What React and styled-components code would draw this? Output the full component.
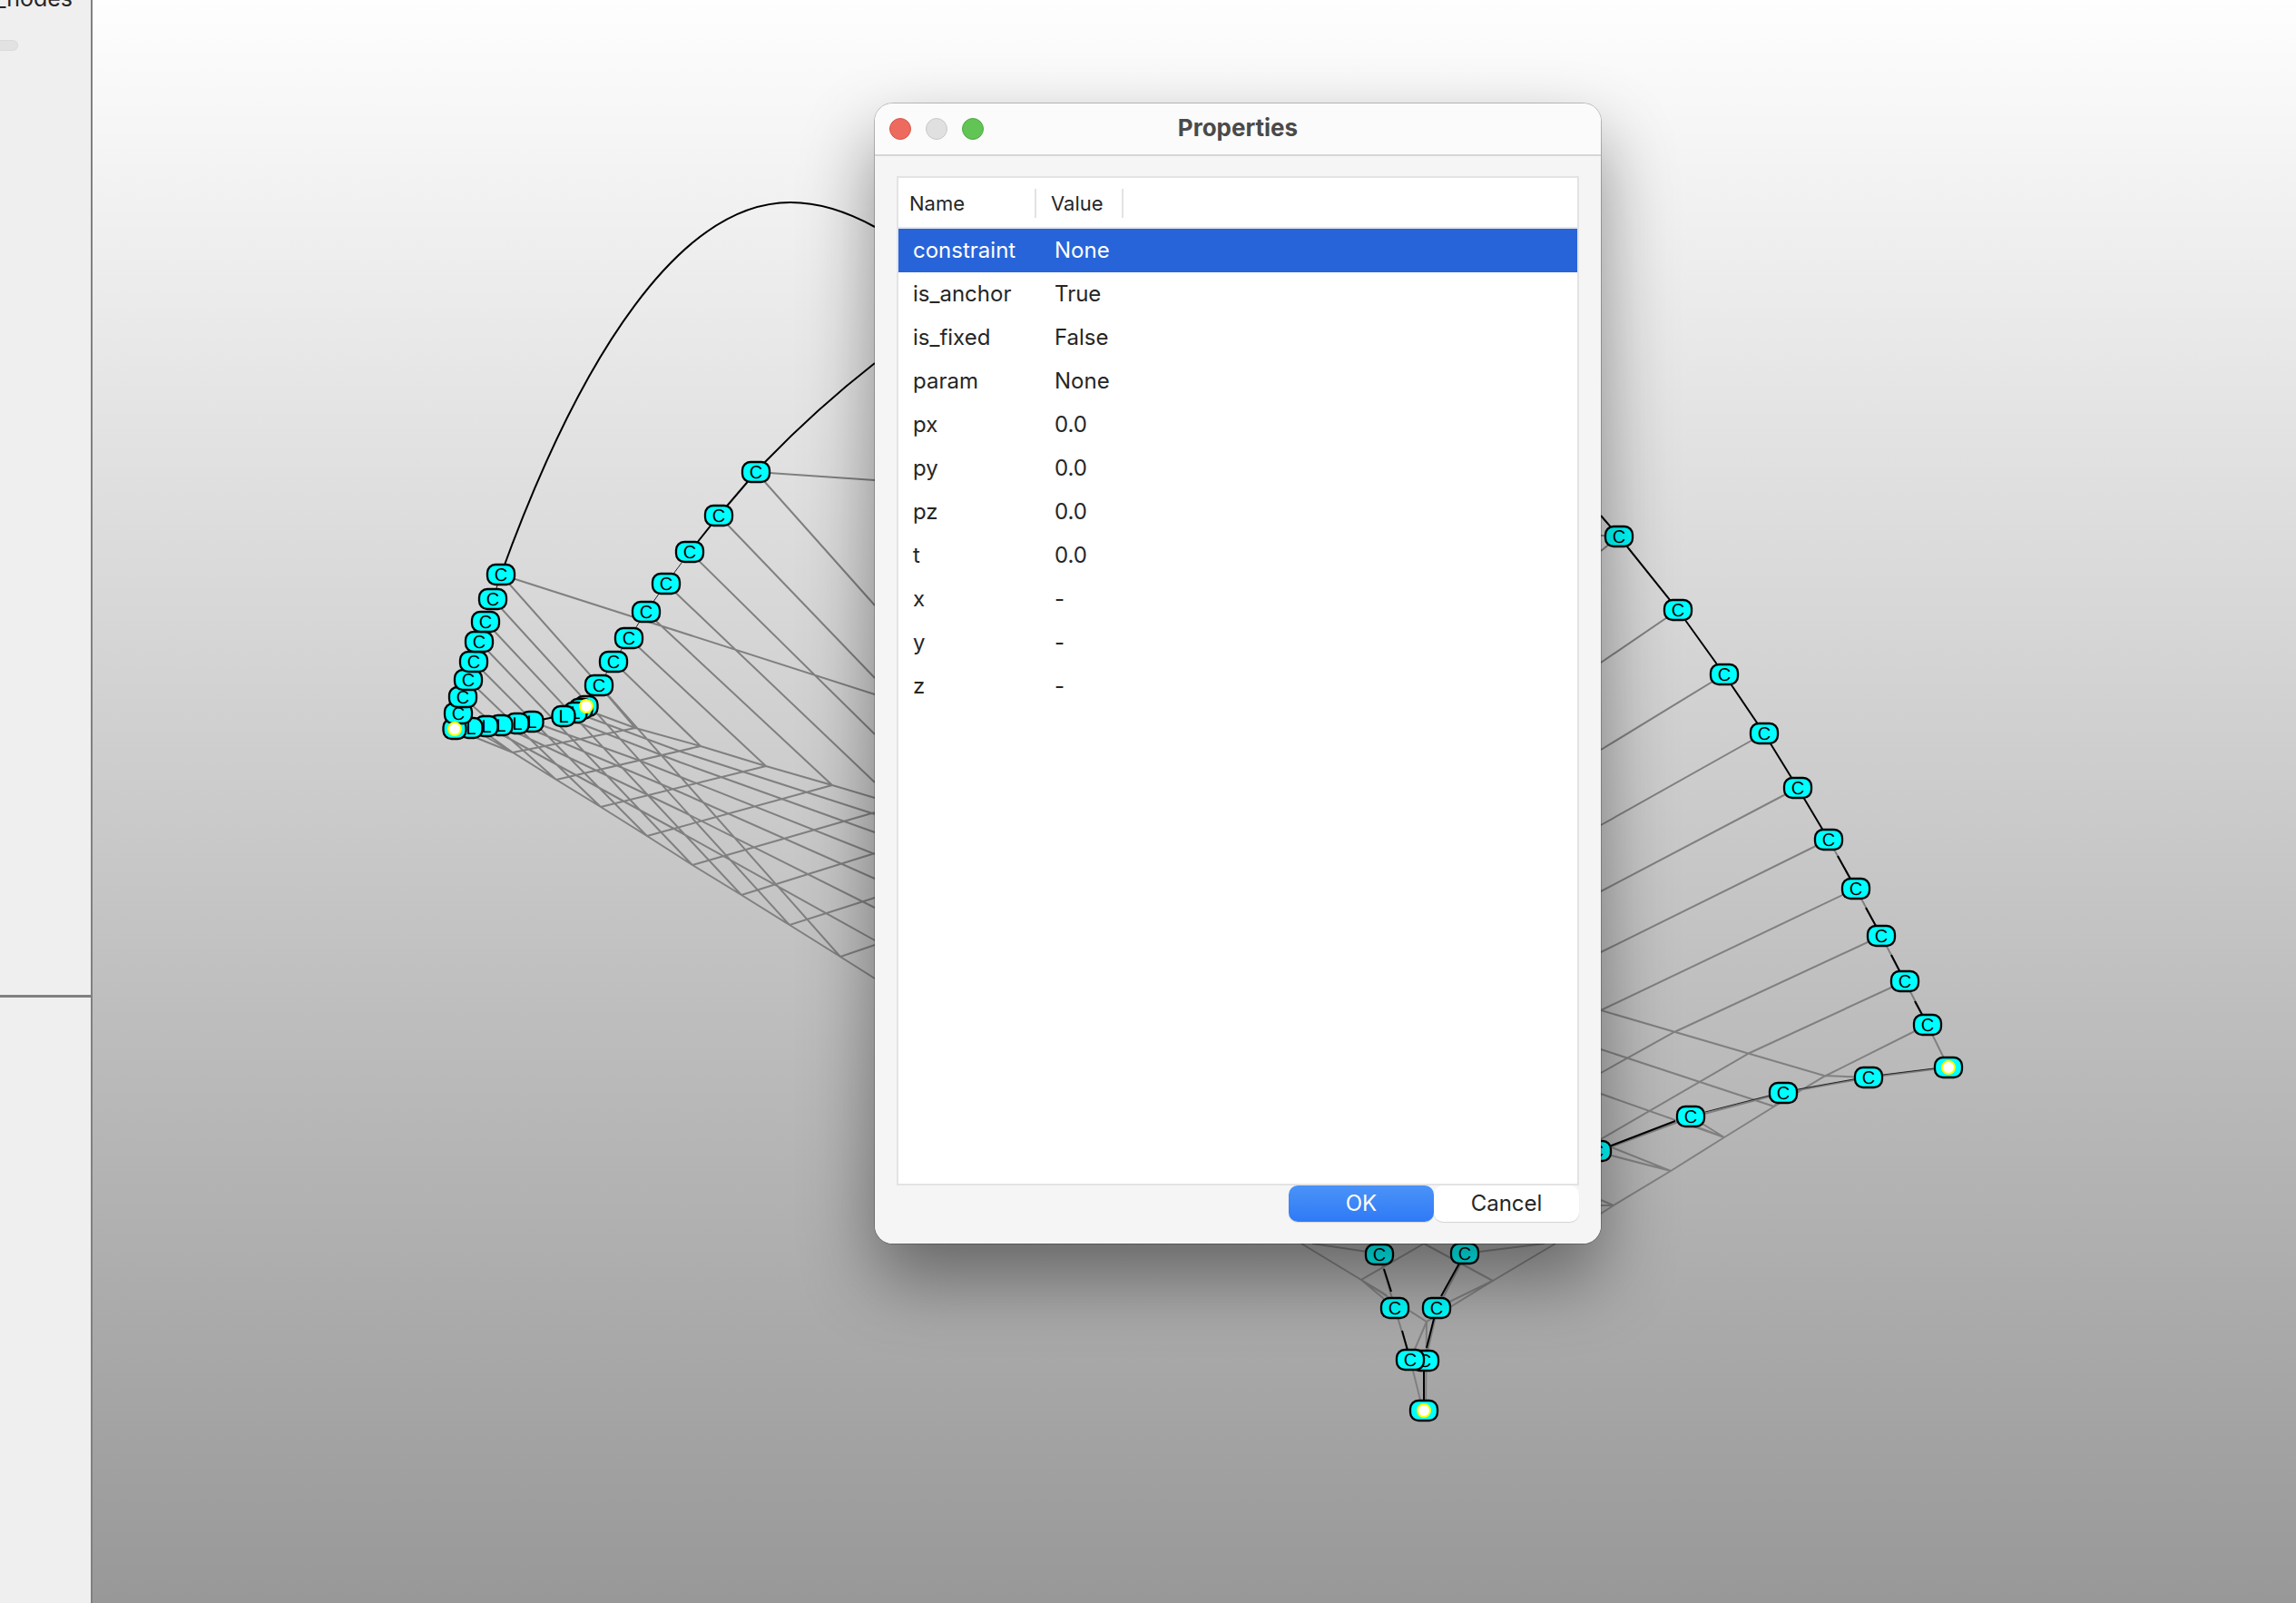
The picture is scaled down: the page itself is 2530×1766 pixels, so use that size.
import React from "react";
import styled, { createGlobalStyle } from "styled-components";

const GlobalStyle = createGlobalStyle`
  *, *::before, *::after { box-sizing: border-box; }
  body {
    margin: 0;
    overflow: hidden;
    font-family: Inter, "Liberation Sans", sans-serif;
    color: #262626;
  }
`;

const Page = styled.div`
  display: flex;
  height: 100vh;
`;

const Sidebar = styled.aside`
  display: flex;
  flex-direction: column;
  flex: none;
  width: 102px;
  overflow: hidden;
  background: #efefef;
  border-right: 2px solid #808080;
`;

const Pane = styled.section`
  flex: ${(p) => p.$share} 1 0;
  min-height: 0;
`;

const Divider = styled.div`
  flex: none;
  height: 3px;
  background: #808080;
`;

const PaneLabel = styled.div`
  display: flex;
  justify-content: flex-end;
  margin-top: -18px;
  padding-right: 20px;
  font-size: 25px;
  line-height: 32px;
`;

const Groove = styled.div`
  width: 20px;
  height: 12px;
  margin-top: 30px;
  border: 1px solid #dadada;
  border-left: 0;
  border-radius: 0 6px 6px 0;
  background: #e2e2e2;
`;

const Viewport = styled.main`
  position: relative;
  flex: 1;
  min-width: 0;
  background: linear-gradient(#fefefe, #989898);
`;

const Scene = styled.svg`
  display: block;
  width: 100%;
  height: 100%;
`;

const Tag = styled.text`
  font-family: "Liberation Sans", sans-serif;
  font-size: 20px;
  text-anchor: middle;
  text-rendering: geometricPrecision;
`;

const Dialog = styled.section`
  position: absolute;
  left: 862px;
  top: 114px;
  width: 800px;
  height: 1256px;
  display: flex;
  flex-direction: column;
  overflow: hidden;
  border-radius: 20px;
  background: #f5f5f5;
`;

const DialogShadow = styled(Dialog)`
  overflow: visible;
  box-shadow: 0 0 0 1px rgba(0, 0, 0, 0.22), 0 38px 80px rgba(0, 0, 0, 0.42);
`;

const TitleBar = styled.header`
  display: grid;
  grid-template-columns: 1fr auto 1fr;
  align-items: center;
  flex: none;
  height: 58px;
  padding: 0 16px;
  background: #fbfbfb;
  border-bottom: 2px solid #d6d6d6;
`;

const Lights = styled.div`
  display: flex;
  gap: 16px;
`;

const Light = styled.button`
  width: 24px;
  height: 24px;
  padding: 0;
  border: 1px solid ${(p) => p.$edge};
  border-radius: 50%;
  background: ${(p) => p.$fill};
`;

const Title = styled.h1`
  margin: 0;
  padding-bottom: 2px;
  font-size: 26px;
  font-weight: 700;
  line-height: 32px;
  color: #4a4a4a;
`;

const Body = styled.div`
  display: flex;
  flex-direction: column;
  flex: 1;
  padding: 22px 24px 24px;
`;

const Frame = styled.div`
  flex: 1;
  border: 2px solid #e3e3e3;
  background: #ffffff;
`;

const Table = styled.table`
  width: 100%;
  table-layout: fixed;
  border-collapse: separate;
  border-spacing: 0;
`;

const Col = styled.col`
  width: ${(p) => p.$width};
`;

const HeadCell = styled.th`
  height: 56px;
  padding: 2px 0 0;
  border-bottom: 2px solid #e6e6e6;
  font-size: 22px;
  font-weight: 400;
  line-height: 32px;
  text-align: left;
`;

const HeadLabel = styled.div`
  padding-left: ${(p) => p.$inset};
  border-right: 2px solid #e3e3e3;
`;

const Row = styled.tr`
  height: 48px;
  background: ${(p) => (p.$selected ? "#2764d9" : "transparent")};
  color: ${(p) => (p.$selected ? "#ffffff" : "inherit")};
`;

const Cell = styled.td`
  padding: 0 0 0 ${(p) => p.$inset};
  font-size: 24px;
  line-height: 32px;
  white-space: nowrap;
`;

const Buttons = styled.footer`
  display: flex;
  justify-content: flex-end;
`;

const Button = styled.button`
  width: 160px;
  height: 40px;
  padding: 0;
  border: 0;
  border-radius: 10px;
  font: inherit;
  font-size: 24px;
  line-height: 32px;
  color: ${(p) => (p.$primary ? "#ffffff" : "#262626")};
  background: ${(p) => (p.$primary ? "linear-gradient(#4a93f8, #2f7af6)" : "#ffffff")};
  box-shadow: 0 1px 1px rgba(0, 0, 0, 0.14);
`;

const PROPERTIES = [
  ["constraint", "None"],
  ["is_anchor", "True"],
  ["is_fixed", "False"],
  ["param", "None"],
  ["px", "0.0"],
  ["py", "0.0"],
  ["pz", "0.0"],
  ["t", "0.0"],
  ["x", "-"],
  ["y", "-"],
  ["z", "-"],
];

const MESH = [
  // left wing: inner chain towards the ridge
  "M833 520L964 529", "M833 520L964 667", "M792 568L964 747", "M760 608L964 809",
  "M734 643L964 862", "M712 674L917 865", "M693 703L844 844", "M676 729L772 822",
  "M660 755L700 802", "M552 633L964 765",
  "M646 782L700 802L772 822L844 844L917 865L964 879",
  // left wing: outer chain towards the lower boundary
  "M552 633L926 1054", "M543 660L870 1019", "M535 685L817 986", "M528 707L763 953",
  "M522 729L713 921", "M516 749L662 889", "M510 768L613 859", "M505 786L565 829",
  "M500 803L565 829L613 859L662 889L713 921L763 953L817 986L870 1019L926 1054L964 1078",
  // left wing: rungs
  "M565 829L700 802", "M613 859L772 822", "M662 889L844 844", "M713 921L917 865",
  "M763 953L964 895", "M817 986L964 940", "M870 1019L964 989", "M926 1054L964 1041",
  // left wing: lines from the L chain
  "M634 785L750 828L964 897", "M621 790L750 840L964 917", "M586 795L705 838L750 856L964 941",
  "M570 797L750 873L964 968", "M552 799L750 893L964 1000", "M536 800L750 917L964 1036",
  "M519 802L565 829",
  // right wing
  "M1784 591L1764 590", "M1784 591L1764 607", "M1849 672L1764 730", "M1900 743L1764 826",
  "M1944 808L1764 909", "M1981 868L1764 982", "M2015 925L1764 1049", "M2045 979L1764 1113",
  "M2073 1031L1845 1137L1764 1182", "M2099 1081L1928 1160L1764 1255",
  "M2124 1129L2010 1186L1955 1219L1900 1253L1841 1290L1778 1328L1764 1337",
  "M1764 1113L2010 1185L2059 1187", "M1764 1156L1955 1219L1965 1204", "M1764 1205L1900 1253L1863 1230",
  "M1863 1239L1900 1253", "M1776 1264L1841 1290L1764 1270", "M1764 1322L1778 1328L1764 1328",
  "M2015 925L2045 979L2073 1031L2099 1081L2124 1129L2147 1176",
  "M2147 1176L2059 1187L1965 1204L1863 1231L1760 1269",
  // bottom tip
  "M1434 1370L1500 1410L1572 1456L1645 1411L1714 1370", "M1446 1370L1520 1381", "M1702 1370L1614 1381",
  "M1569 1370L1500 1410L1537 1441", "M1569 1370L1645 1411L1583 1441", "M1500 1410L1528 1427",
  "M1572 1456L1554 1498", "M1572 1456L1571 1554",
  "M1520 1382L1537 1441L1554 1498L1568 1554",
  "M1615 1382L1584 1441L1571 1498",
];

const CURVES = [
  "M552 633C640 390 750 223 871 223C905 223 935 234 964 250",
  "M760 608L792 568L833 520L843 509Q900 450 964 400",
  "M1764 568L1784 591L1849 672L1900 743L1944 808L1981 868L2015 925",
  "M2025 943L2045 979", "M2056 1000L2073 1031", "M2084 1052L2099 1081", "M2110 1103L2124 1129",
  "M1760 1268L1846 1235", "M1525 1398L1533 1423", "M1545 1466L1554 1498",
  "M1614 1381L1588 1428", "M1583 1441L1572 1485", "M1569 1500L1569 1554", "M586 795L621 788",
];

const THIN_CURVES = [
  "M552 633L543 660", "M760 608L734 643L712 674L693 703L676 729L660 755L646 778",
  "M1879 1225L1965 1203L2059 1186L2147 1175",
];

// Listed back to front; an anchor carries no letter because its dot covers it.
const MARKERS = [
  [646, 778, "L", true], [640, 781, "L"], [634, 785, "L"], [621, 789, "L"],
  [586, 795, "L"], [570, 797, "L"], [552, 799, "L"], [536, 800, "L"], [519, 802, "L"],
  [501, 803, "L", true],
  [505, 786, "C"], [510, 768, "C"], [516, 749, "C"], [522, 729, "C"],
  [528, 707, "C"], [535, 685, "C"], [543, 660, "C"], [552, 633, "C"],
  [660, 755, "C"], [676, 729, "C"], [693, 703, "C"], [712, 674, "C"],
  [734, 643, "C"], [760, 608, "C"], [792, 568, "C"], [833, 520, "C"],
  [1784, 591, "C"], [1849, 672, "C"], [1900, 743, "C"], [1944, 808, "C"],
  [1981, 868, "C"], [2015, 925, "C"], [2045, 979, "C"], [2073, 1031, "C"],
  [2099, 1081, "C"], [2124, 1129, "C"], [2147, 1176, "C", true], [2059, 1187, "C"],
  [1965, 1204, "C"], [1863, 1230, "C"], [1760, 1268, "C"],
  [1520, 1382, "C"], [1614, 1381, "C"], [1537, 1441, "C"], [1583, 1441, "C"],
  [1570, 1499, "C"], [1554, 1498, "C"], [1569, 1554, "C", true],
];

function Marker({ x, y, letter, anchor }) {
  const w = letter === "C" ? 30 : 25;
  return (
    <g>
      <rect x={x - w / 2} y={y - 11} width={w} height={22} rx={9} fill="#00ffff" stroke="#000" strokeWidth={2.3} />
      {!anchor && <Tag x={x} y={y + 7}>{letter}</Tag>}
    </g>
  );
}

function Model() {
  return (
    <Scene aria-label="Wireframe model">
      <g transform="translate(-102 0)">
        <path d={MESH.join("")} fill="none" stroke="#808080" strokeWidth={2} />
        <path d={THIN_CURVES.join("")} fill="none" stroke="#222" strokeWidth={1} />
        <path d={CURVES.join("")} fill="none" stroke="#000" strokeWidth={2} />
        {MARKERS.map(([x, y, letter, anchor]) => (
          <Marker key={`${x}-${y}`} x={x} y={y} letter={letter} anchor={anchor} />
        ))}
        {MARKERS.filter((m) => m[3]).map(([x, y]) => (
          <circle key={x} cx={x} cy={y} r={7} fill="#fff" stroke="#ffff00" strokeWidth={2} />
        ))}
      </g>
    </Scene>
  );
}

function PropertyTable() {
  return (
    <Table>
      <colgroup>
        <Col $width="152px" />
        <Col $width="96px" />
        <Col $width="auto" />
      </colgroup>
      <thead>
        <tr>
          <HeadCell scope="col"><HeadLabel $inset="12px">Name</HeadLabel></HeadCell>
          <HeadCell scope="col"><HeadLabel $inset="16px">Value</HeadLabel></HeadCell>
          <HeadCell as="td" />
        </tr>
      </thead>
      <tbody>
        {PROPERTIES.map(([name, value], i) => (
          <Row key={name} $selected={i === 0}>
            <Cell $inset="16px">{name}</Cell>
            <Cell $inset="20px">{value}</Cell>
            <Cell $inset="0" />
          </Row>
        ))}
      </tbody>
    </Table>
  );
}

export default function App() {
  return (
    <>
      <GlobalStyle />
      <Page>
        <Sidebar>
          <Pane $share={1096}>
            <PaneLabel>_nodes</PaneLabel>
            <Groove />
          </Pane>
          <Divider />
          <Pane $share={667} />
        </Sidebar>
        <Viewport>
          <Model />
          <DialogShadow aria-hidden="true" />
          <Dialog role="dialog" aria-labelledby="dialog-title">
            <TitleBar>
              <Lights>
                <Light type="button" aria-label="Close" $fill="#ed6a5e" $edge="#d9554a" />
                <Light type="button" aria-label="Minimize" disabled $fill="#e0e0e0" $edge="#c9c9c9" />
                <Light type="button" aria-label="Zoom" $fill="#61c454" $edge="#51a945" />
              </Lights>
              <Title id="dialog-title">Properties</Title>
            </TitleBar>
            <Body>
              <Frame><PropertyTable /></Frame>
              <Buttons>
                <Button type="button" $primary>OK</Button>
                <Button type="button">Cancel</Button>
              </Buttons>
            </Body>
          </Dialog>
        </Viewport>
      </Page>
    </>
  );
}
